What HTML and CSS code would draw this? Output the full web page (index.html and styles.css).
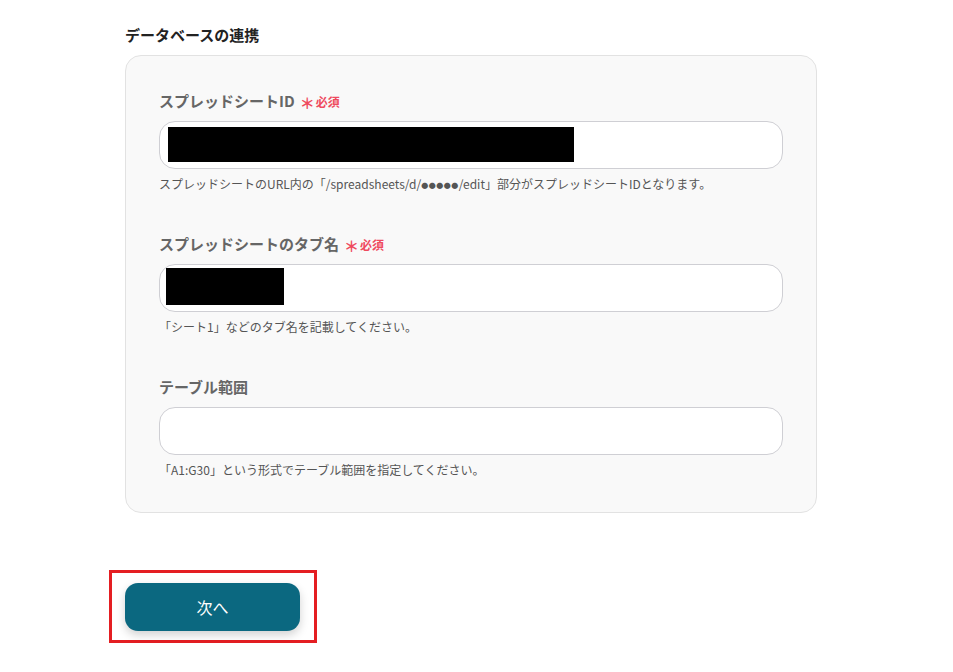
FILE: index.html
```html
<!DOCTYPE html>
<html lang="ja">
<head>
<meta charset="utf-8">
<link rel="stylesheet" href="styles.css">
</head>
<body>
<div class="page">
  <h2 class="section-title">データベースの連携</h2>
  <div class="panel">
    <div class="field">
      <div class="label">スプレッドシートID<span class="req"><span class="ast">＊</span>必須</span></div>
      <div class="input"><div class="redact redact-1"></div></div>
      <div class="help">スプレッドシートのURL内の「/spreadsheets/d/<span class="dots">●●●●●</span>/edit」部分がスプレッドシートIDとなります。</div>
    </div>
    <div class="field">
      <div class="label">スプレッドシートのタブ名<span class="req"><span class="ast">＊</span>必須</span></div>
      <div class="input"><div class="redact redact-2"></div></div>
      <div class="help">「シート1」などのタブ名を記載してください。</div>
    </div>
    <div class="field">
      <div class="label">テーブル範囲</div>
      <div class="input"></div>
      <div class="help">「A1:G30」という形式でテーブル範囲を指定してください。</div>
    </div>
  </div>
  <div class="highlight">
    <button class="next-btn">次へ</button>
  </div>
</div>
</body>
</html>
```

FILE: styles.css
```css
html, body {
  margin: 0;
  padding: 0;
  background: #ffffff;
}
body {
  font-family: "Noto Sans CJK JP", "Noto Sans", sans-serif;
  color: #222;
}
.page {
  padding: 25px 0 0 125px;
  width: 692px;
}
.section-title {
  margin: 0 0 10px 0;
  font-size: 15px;
  line-height: 20px;
  font-weight: 700;
  color: #222;
}
.panel {
  background: #f9f9f9;
  border: 1px solid #e2e2e2;
  border-radius: 16px;
  padding: 35px 33px 33px 33px;
  display: flex;
  flex-direction: column;
  gap: 41px;
}
.field {
  display: flex;
  flex-direction: column;
}
.label {
  height: 20px;
  font-size: 15px;
  line-height: 20px;
  font-weight: 700;
  color: #666;
  display: flex;
  align-items: center;
}
.req {
  color: #ef4a5e;
  font-size: 12px;
  line-height: 20px;
  font-weight: 700;
  margin-left: 5px;
  display: inline-flex;
  align-items: center;
  padding-top: 2px;
}
.ast {
  font-size: 15px;
  line-height: 20px;
  margin-right: 1px;
  padding-top: 2px;
}
.input {
  margin-top: 10px;
  height: 46px;
  background: #fff;
  border: 1px solid #cfcfd4;
  border-radius: 16px;
  position: relative;
}
.redact {
  position: absolute;
  background: #000;
}
.redact-1 {
  left: 8px;
  top: 5px;
  width: 406px;
  height: 35px;
}
.redact-2 {
  left: 6px;
  top: 3px;
  width: 118px;
  height: 37px;
}
.help {
  margin-top: 6px;
  height: 18px;
  font-size: 12px;
  line-height: 18px;
  color: #555;
}
.dots {
  font-size: 7px;
  line-height: 0;
  letter-spacing: 0.5px;
  vertical-align: 1px;
}
.highlight {
  box-sizing: border-box;
  margin: 57px 0 0 -16px;
  width: 208px;
  border: 3px solid #e41e22;
  padding: 10px 14px 9px 13px;
}
.next-btn {
  display: block;
  width: 175px;
  height: 48px;
  border: none;
  border-radius: 13px;
  background: #0b6880;
  color: #fff;
  font-family: "Noto Sans CJK JP", "Noto Sans", sans-serif;
  font-size: 16px;
  box-shadow: 0 4px 10px rgba(0, 0, 0, 0.18);
  cursor: pointer;
}
```
